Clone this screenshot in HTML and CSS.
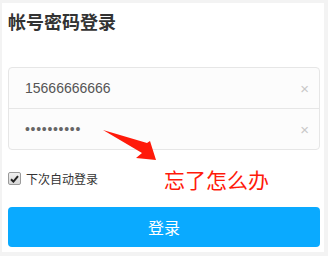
FILE: index.html
```html
<!DOCTYPE html>
<html lang="zh">
<head>
<meta charset="utf-8">
<link rel="stylesheet" href="styles.css">
</head>
<body>
<div class="card">
  <h1 class="title">帐号密码登录</h1>
  <div class="fields">
    <div class="field">
      <span class="value">15666666666</span>
      <span class="clear">×</span>
    </div>
    <div class="field">
      <span class="value dots">••••••••••</span>
      <span class="clear">×</span>
    </div>
  </div>
  <div class="remember">
    <span class="check">
      <svg width="9" height="8" viewBox="0 0 9 8"><path d="M1 4.2 L3.4 6.6 L8 1.2" fill="none" stroke="#222" stroke-width="2"/></svg>
    </span>
    <span class="label">下次自动登录</span>
  </div>
  <button class="submit">登录</button>
  <svg class="arrow" width="60" height="40" viewBox="0 0 60 40">
    <polygon points="0,1 44,14 47,12 53,31 33,29 39,24" fill="#ff1a0a"/>
  </svg>
  <div class="note">忘了怎么办</div>
</div>
</body>
</html>
```
FILE: styles.css
```css
html, body {
  margin: 0;
  padding: 0;
}
body {
  background: #f3f3f3;
  width: 328px;
  height: 256px;
  padding: 3px 4px 4px 2px;
  box-sizing: border-box;
  font-family: "Noto Sans CJK SC", "Liberation Sans", sans-serif;
}
.card {
  position: relative;
  background: #fff;
  height: 249px;
  padding: 9px 4px 0 6px;
  box-sizing: border-box;
}
.title {
  margin: 0;
  font-size: 18px;
  line-height: 18px;
  font-weight: bold;
  color: #333;
}
.fields {
  margin-top: 37px;
  border: 1px solid #e6e6e6;
  border-radius: 4px;
  background: #fcfcfc;
}
.field {
  height: 40px;
  display: flex;
  align-items: center;
  padding: 0 10px 0 16px;
}
.field + .field {
  border-top: 1px solid #e6e6e6;
}
.value {
  flex: 1;
  font-family: "Liberation Sans", "Noto Sans CJK SC", sans-serif;
  font-size: 14px;
  color: #555;
}
.dots {
  font-size: 14px;
  letter-spacing: 0.7px;
  color: #666;
}
.clear {
  font-family: "Liberation Sans", sans-serif;
  font-size: 15px;
  color: #c8c8c8;
}
.remember {
  margin-top: 22px;
  height: 13px;
  display: flex;
  align-items: center;
}
.check {
  width: 11px;
  height: 11px;
  border: 1px solid #9a9a9a;
  border-radius: 2px;
  background: linear-gradient(#f0f0f0, #d8d8d8);
  display: flex;
  align-items: center;
  justify-content: center;
}
.label {
  margin-left: 5px;
  font-size: 12px;
  color: #333;
}
.submit {
  display: block;
  margin-top: 22px;
  width: 100%;
  height: 40px;
  border: none;
  border-radius: 4px;
  background: #0aaaff;
  color: #fff;
  font-family: "Noto Sans CJK SC", sans-serif;
  font-size: 16px;
  padding: 0;
}
.arrow {
  position: absolute;
  left: 101px;
  top: 126px;
}
.note {
  position: absolute;
  left: 162px;
  top: 164px;
  font-size: 21px;
  line-height: 24px;
  color: #ff1a0a;
}
```
